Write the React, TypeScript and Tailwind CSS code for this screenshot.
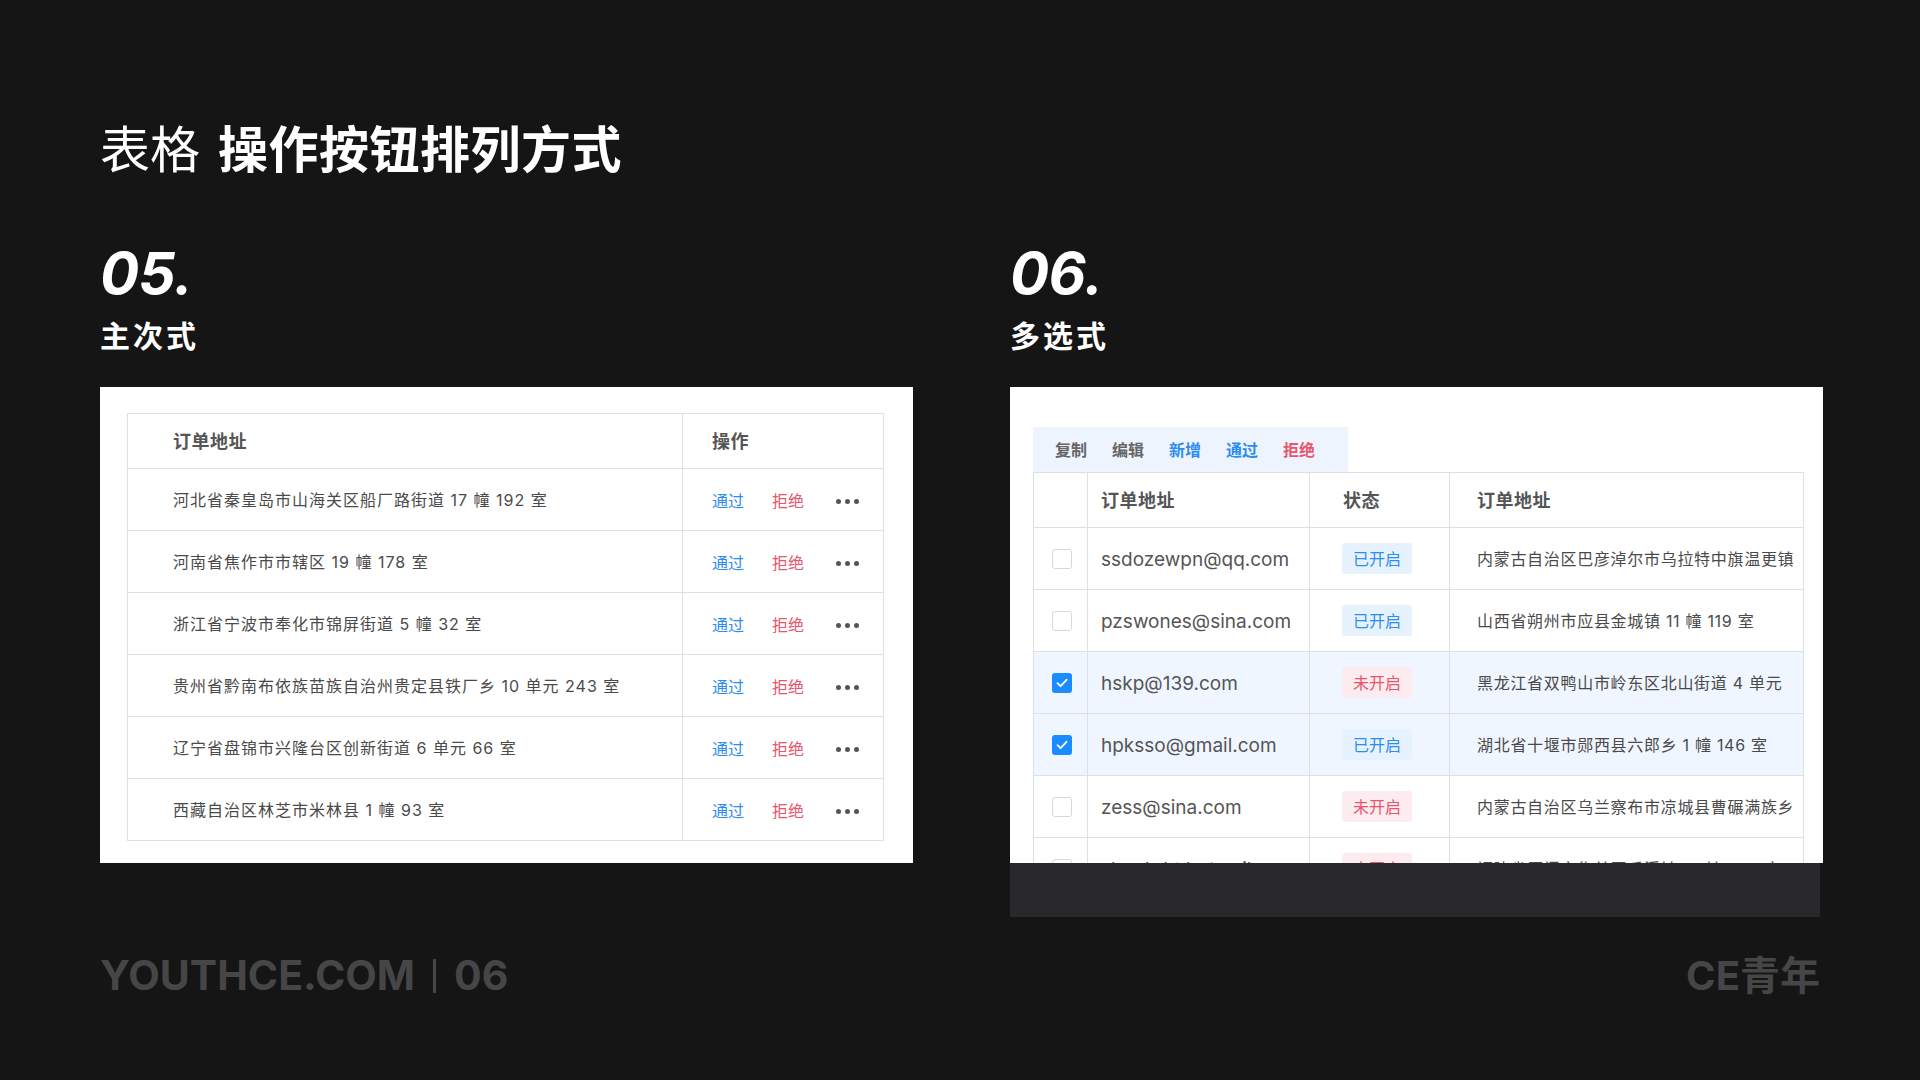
import React from 'react';

const LEFT_ROWS = [
  '河北省秦皇岛市山海关区船厂路街道 17 幢 192 室',
  '河南省焦作市市辖区 19 幢 178 室',
  '浙江省宁波市奉化市锦屏街道 5 幢 32 室',
  '贵州省黔南布依族苗族自治州贵定县铁厂乡 10 单元 243 室',
  '辽宁省盘锦市兴隆台区创新街道 6 单元 66 室',
  '西藏自治区林芝市米林县 1 幢 93 室',
];

type RightRow = { email: string; on: boolean; address: string; checked: boolean };

const RIGHT_ROWS: RightRow[] = [
  { email: 'ssdozewpn@qq.com', on: true, address: '内蒙古自治区巴彦淖尔市乌拉特中旗温更镇', checked: false },
  { email: 'pzswones@sina.com', on: true, address: '山西省朔州市应县金城镇 11 幢 119 室', checked: false },
  { email: 'hskp@139.com', on: false, address: '黑龙江省双鸭山市岭东区北山街道 4 单元', checked: true },
  { email: 'hpksso@gmail.com', on: true, address: '湖北省十堰市郧西县六郎乡 1 幢 146 室', checked: true },
  { email: 'zess@sina.com', on: false, address: '内蒙古自治区乌兰察布市凉城县曹碾满族乡', checked: false },
  { email: 'shuohd@hotmail.com', on: false, address: '福建省厦门市集美区后溪镇 13 幢 242 室', checked: false },
];

function Dots() {
  return (
    <div className="flex items-center gap-[4px]">
      <span className="h-[5px] w-[5px] rounded-full bg-[#555]" />
      <span className="h-[5px] w-[5px] rounded-full bg-[#555]" />
      <span className="h-[5px] w-[5px] rounded-full bg-[#555]" />
    </div>
  );
}

function Checkbox({ checked }: { checked: boolean }) {
  if (checked) {
    return (
      <span className="flex h-[20px] w-[20px] items-center justify-center rounded-[3px] bg-[#1a8cff]">
        <svg width="12" height="10" viewBox="0 0 12 10" fill="none">
          <path d="M1.5 5.2 4.6 8.2 10.5 1.8" stroke="#fff" strokeWidth="1.8" strokeLinecap="round" strokeLinejoin="round" />
        </svg>
      </span>
    );
  }
  return <span className="h-[20px] w-[20px] rounded-[3px] border border-[#d6d8dc] bg-white" />;
}

function Tag({ on }: { on: boolean }) {
  return on ? (
    <span className="flex h-[31px] w-[70px] items-center justify-center rounded-[3px] bg-[#e6f3ff] text-[16px] text-[#2f8cf0]">
      已开启
    </span>
  ) : (
    <span className="flex h-[31px] w-[70px] items-center justify-center rounded-[3px] bg-[#fdecef] text-[16px] text-[#e8566c]">
      未开启
    </span>
  );
}

function LeftPanel() {
  return (
    <div className="h-[476px] w-[813px] bg-white pl-[27px] pt-[26px]">
      <div className="w-[757px] border border-[#dfe0e3]">
        <div className="flex h-[54px]">
          <div className="flex w-[555px] items-center border-r border-[#dfe0e3] pl-[45px] text-[18px] font-semibold tracking-[0.5px] text-[#555]">
            订单地址
          </div>
          <div className="flex flex-1 items-center pl-[29px] text-[18px] font-semibold tracking-[0.5px] text-[#555]">操作</div>
        </div>
        {LEFT_ROWS.map((r) => (
          <div key={r} className="flex h-[62px] border-t border-[#dfe0e3]">
            <div className="flex w-[555px] items-center whitespace-nowrap border-r border-[#dfe0e3] pl-[45px] text-[16px] tracking-[1px] text-[#4a4a4a]">
              {r}
            </div>
            <div className="flex flex-1 items-center pl-[29px] pt-[3px] text-[16px]">
              <span className="text-[#2d8cf0]">通过</span>
              <span className="ml-[28px] text-[#e8566c]">拒绝</span>
              <span className="ml-[32px]">
                <Dots />
              </span>
            </div>
          </div>
        ))}
      </div>
    </div>
  );
}

function RightPanel() {
  return (
    <div>
      <div className="h-[476px] w-[813px] overflow-hidden bg-white pl-[23px] pt-[40px]">
        <div className="flex h-[45px] w-[315px] items-center gap-[25px] bg-[#edf4fe] pl-[22px] text-[16px] font-semibold">
          <span className="text-[#666]">复制</span>
          <span className="text-[#666]">编辑</span>
          <span className="text-[#2d8cf0]">新增</span>
          <span className="text-[#2d8cf0]">通过</span>
          <span className="text-[#e8566c]">拒绝</span>
        </div>
        <div className="w-[771px] border border-[#dfe0e3]">
          <div className="flex h-[54px] text-[18px] font-semibold tracking-[0.5px] text-[#555]">
            <div className="w-[54px] border-r border-[#dfe0e3]" />
            <div className="flex w-[222px] items-center border-r border-[#dfe0e3] pl-[13px]">订单地址</div>
            <div className="flex w-[140px] items-center border-r border-[#dfe0e3] pl-[33px]">状态</div>
            <div className="flex flex-1 items-center pl-[27px]">订单地址</div>
          </div>
          {RIGHT_ROWS.map((r) => (
            <div
              key={r.email}
              className={`flex h-[62px] border-t border-[#dfe0e3] ${r.checked ? 'bg-[#f0f6ff]' : 'bg-white'}`}
            >
              <div className="flex w-[54px] items-center justify-center border-r border-[#dfe0e3] pl-[2px]">
                <Checkbox checked={r.checked} />
              </div>
              <div className="flex w-[222px] items-center border-r border-[#dfe0e3] pl-[13px] pt-[4px] text-[19px] text-[#555]">
                {r.email}
              </div>
              <div className="flex w-[140px] items-center border-r border-[#dfe0e3] pl-[32px]">
                <Tag on={r.on} />
              </div>
              <div className="flex flex-1 items-center overflow-hidden whitespace-nowrap pl-[27px] text-[16px] tracking-[0.7px] text-[#4a4a4a]">
                {r.address}
              </div>
            </div>
          ))}
        </div>
      </div>
      <div className="h-[54px] w-[810px] bg-[#29292b]" />
    </div>
  );
}

function Section({ num, name, children }: { num: string; name: string; children: React.ReactNode }) {
  return (
    <div className="w-[813px]">
      <div className="text-[58px] font-bold italic leading-none tracking-[-0.5px] text-white">{num}</div>
      <div className="mt-[19px] text-[30px] font-bold leading-none tracking-[3px] text-white">{name}</div>
      <div className="mt-[36px]">{children}</div>
    </div>
  );
}

export default function App() {
  return (
    <div className="h-[1080px] w-[1920px] overflow-hidden bg-[#151515] pl-[100px] pt-[125px] font-['Inter','Noto_Sans_CJK_SC',sans-serif]">
      <h1 className="text-[50px] font-normal leading-none text-white">
        表格<span className="ml-[18px] font-bold tracking-[0.5px]">操作按钮排列方式</span>
      </h1>
      <div className="mt-[69px] flex items-start gap-[97px]">
        <Section num="05." name="主次式">
          <LeftPanel />
        </Section>
        <Section num="06." name="多选式">
          <RightPanel />
        </Section>
      </div>
      <div className="mt-[38px] flex w-[1720px] items-center justify-between text-[41px] font-bold leading-none text-[#464646]">
        <div className="flex items-center">
          <span>YOUTHCE.COM</span>
          <span className="mx-[18px] h-[34px] w-[3px] bg-[#464646]" />
          <span>06</span>
        </div>
        <div className="text-[40px]">CE青年</div>
      </div>
    </div>
  );
}
